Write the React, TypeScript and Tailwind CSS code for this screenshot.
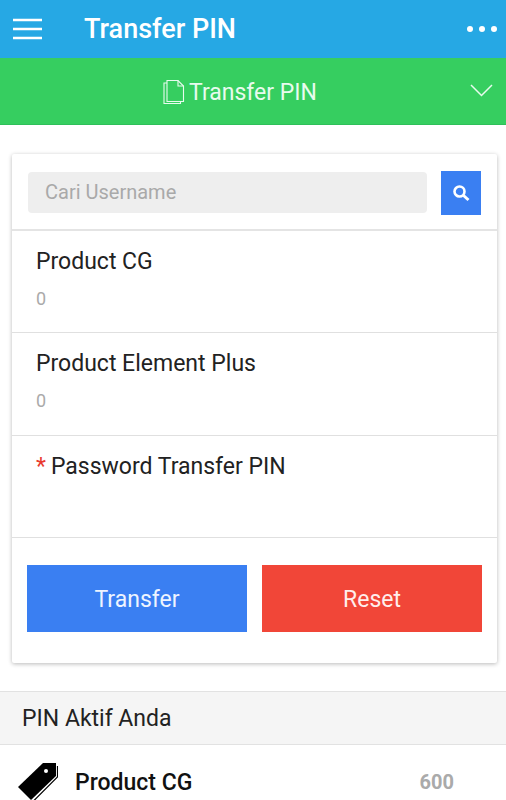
import React from 'react';

const FieldRow = ({ label, value, height }: { label: string; value: string; height: string }) => (
  <div className={`${height} border-b border-[#e0e0e0] pl-6 pt-[16px]`}>
    <div className="text-[23px] leading-[30px] text-[#222]">{label}</div>
    <div className="mt-[7px] text-[18px] leading-[30px] text-[#aaa]">{value}</div>
  </div>
);

const App = () => {
  return (
    <div className="h-[800px] w-[506px] overflow-hidden bg-white font-['Roboto',sans-serif]">
      <header className="flex h-[58px] items-center bg-[#26a8e4] pl-[13px] pr-[9px]">
        <svg width="29" height="22" viewBox="0 0 29 22" className="shrink-0">
          <path d="M0 2h29M0 11h29M0 20h29" stroke="#fff" strokeWidth="2.6" />
        </svg>
        <h1 className="ml-[42px] flex-1 text-[27px] font-medium text-white">Transfer PIN</h1>
        <div className="flex gap-[6px]">
          <span className="h-[6px] w-[6px] rounded-full bg-white" />
          <span className="h-[6px] w-[6px] rounded-full bg-white" />
          <span className="h-[6px] w-[6px] rounded-full bg-white" />
        </div>
      </header>

      <div className="relative flex h-[67px] items-center justify-center border-b border-[#2fbf5a] bg-[#36ce60] pr-[26px] pt-[4px] text-[23px] text-[#e8fbee]">
        <svg width="22" height="26" viewBox="0 0 22 26" fill="none" stroke="#e8fbee" strokeWidth="1.1" className="mr-[4px] mt-[-3px] shrink-0">
          <path d="M4 1.5h11l5.5 5.5v15.5H4z" />
          <path d="M15 1.5V7h5.5" />
          <path d="M4 4H1v20.500h16.500V22.500" />
        </svg>
        <span>Transfer PIN</span>
        <svg width="23" height="13" viewBox="0 0 23 13" fill="none" stroke="#e8fbee" strokeWidth="1.5" className="absolute right-[13px] top-[26px]">
          <path d="M1 1l10.500 10.500L22 1" />
        </svg>
      </div>

      <main className="mx-3 mt-[29px] h-[509px] w-[485px] rounded-[2px] bg-white shadow-[0_1px_4px_rgba(0,0,0,0.28)]">
        <div className="flex h-[77px] items-start border-b-2 border-[#e4e4e4] pl-4 pr-4 pt-[18px]">
          <div className="flex h-[41px] flex-1 items-center rounded-[4px] bg-[#eeeeee] pb-[2px] pl-[17px] text-[20px] text-[#a9a9a9]">
            Cari Username
          </div>
          <button className="ml-[14px] mt-[-1px] flex h-[44px] w-[40px] items-center justify-center bg-[#3a7ff2]">
            <svg width="18" height="18" viewBox="0 0 18 18" fill="none" stroke="#fff">
              <circle cx="7.500" cy="7.500" r="5" strokeWidth="2.6" />
              <path d="M11.500 11.500l5 4.500" strokeWidth="3" />
            </svg>
          </button>
        </div>

        <FieldRow label="Product CG" value="0" height="h-[102px]" />
        <FieldRow label="Product Element Plus" value="0" height="h-[103px]" />

        <div className="h-[102px] border-b border-[#e0e0e0] pl-6 pt-[16px] text-[23px] leading-[30px] text-[#222]">
          <span className="mr-[5px] text-[#e8392f]">*</span>
          Password Transfer PIN
        </div>

        <div className="flex gap-[15px] pl-[15px] pt-[27px]">
          <button className="h-[67px] w-[220px] bg-[#3a7ff2] pt-[3px] text-[23px] text-[#eef4ff]">Transfer</button>
          <button className="h-[67px] w-[220px] bg-[#f14638] pt-[3px] text-[23px] text-[#ffeeec]">Reset</button>
        </div>
      </main>

      <section className="mt-[28px] flex h-[54px] items-center border-y border-[#e2e2e2] bg-[#f5f5f5] pl-[22px] pt-[2px] text-[23px] text-[#222]">
        PIN Aktif Anda
      </section>

      <div className="flex items-start pl-[17px] pt-[17px]">
        <svg width="41" height="40" viewBox="0 0 41 40" className="shrink-0">
          <path d="M26 1h13v13L14 38 1 25z" fill="#000" />
          <circle cx="29" cy="9" r="2" fill="#fff" />
          <path d="M40.500 4v11L16 39.500" fill="none" stroke="#000" strokeWidth="1.2" />
        </svg>
        <span className="ml-[17px] flex-1 pt-[5px] text-[23px] font-medium leading-[32px] text-[#111]">Product CG</span>
        <span className="mr-[52px] pt-[4px] text-[20px] font-bold leading-[32px] text-[#aaa]">600</span>
      </div>
    </div>
  );
};

export default App;
